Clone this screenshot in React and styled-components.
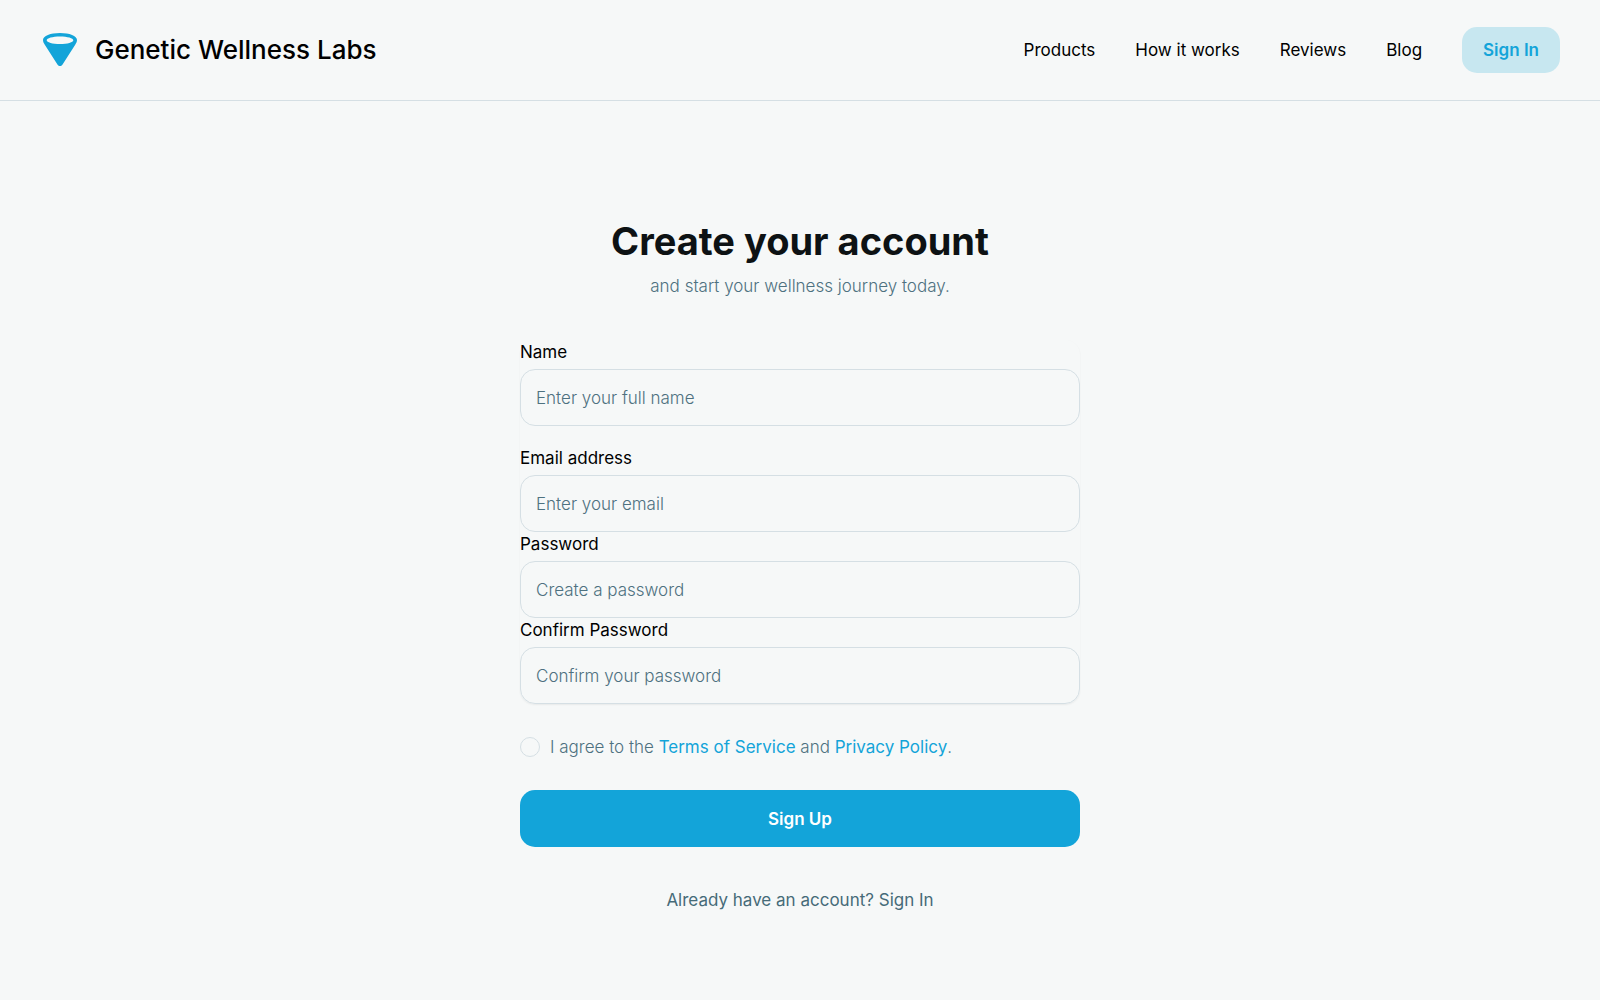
import React, { useState } from "react";
import styled, { createGlobalStyle } from "styled-components";

const color = {
  page: "#f6f8f8",
  ink: "#0d1214",
  muted: "#4e7180",
  deep: "#466b78",
  line: "#d5dfe4",
  brand: "#13a4d9",
  brandSoft: "#c7e7f0",
};

const GlobalStyle = createGlobalStyle`
  *, *::before, *::after { box-sizing: border-box; }
  body {
    margin: 0;
    background: ${color.page};
    color: #000;
    font: 400 17px/24px Inter, "Open Sans", sans-serif;
  }
  a { color: inherit; text-decoration: none; }
  button, input { font: inherit; }
`;

const Header = styled.header`
  display: flex;
  align-items: center;
  justify-content: space-between;
  padding: 27px 40px;
  border-bottom: 1px solid ${color.line};
`;

const Brand = styled.a`
  display: flex;
  align-items: center;
  gap: 15px;
  font-size: 26px;
  font-weight: 500;
  line-height: 40px;
`;

const Logo = styled.svg`
  width: 40px;
  height: 40px;
`;

const Nav = styled.nav`
  display: flex;
  align-items: center;
  gap: 40px;
`;

const HeaderButton = styled.button`
  height: 46px;
  padding: 0 21px;
  border: 0;
  border-radius: 15px;
  background: ${color.brandSoft};
  color: ${color.brand};
  font-weight: 600;
  cursor: pointer;
`;

const Main = styled.main`
  display: flex;
  flex-direction: column;
  width: 100%;
  max-width: 600px;
  margin: 0 auto;
  padding: 116px 20px 80px;
`;

const Title = styled.h1`
  margin: 0;
  color: ${color.ink};
  font-size: 38px;
  font-weight: 700;
  line-height: 48px;
  text-align: center;
`;

const Subtitle = styled.p`
  margin: 9px 0 42px;
  color: ${color.muted};
  font-weight: 300;
  text-align: center;
`;

const Form = styled.form`
  display: flex;
  flex-direction: column;
  gap: 31px;
`;

const Fields = styled.div`
  display: flex;
  flex-direction: column;
  border-radius: 15px;
  box-shadow: 0 1px 2px rgba(0, 0, 0, 0.06);
`;

const Field = styled.div`
  display: flex;
  flex-direction: column;
  gap: 5px;
  margin-bottom: ${(p) => (p.$spaced ? "20px" : "0")};
`;

const Input = styled.input`
  width: 100%;
  height: 57px;
  padding: 0 15px;
  border: 1px solid ${color.line};
  border-radius: 15px;
  background: ${color.page};
  color: ${color.ink};
  font-weight: 300;

  &::placeholder { color: ${color.muted}; opacity: 1; }
  &:focus { outline: none; border-color: ${color.brand}; }
`;

const Agreement = styled.div`
  display: flex;
  align-items: center;
  gap: 10px;
  color: ${color.muted};
  font-weight: 300;
`;

const Checkbox = styled.input`
  appearance: none;
  width: 20px;
  height: 20px;
  margin: 0;
  border: 1px solid ${color.line};
  border-radius: 50%;
  cursor: pointer;

  &:checked { background: ${color.brand}; border-color: ${color.brand}; }
`;

const TextLink = styled.a`
  color: ${color.brand};
  font-weight: 400;
`;

const SubmitButton = styled.button`
  height: 57px;
  border: 0;
  border-radius: 15px;
  background: ${color.brand};
  color: #fff;
  font-weight: 600;
  cursor: pointer;
`;

const Footnote = styled.p`
  margin: 41px 0 0;
  color: ${color.deep};
  text-align: center;
`;

const links = ["Products", "How it works", "Reviews", "Blog"];

const fields = [
  { id: "name", label: "Name", type: "text", hint: "Enter your full name", spaced: true },
  { id: "email", label: "Email address", type: "email", hint: "Enter your email" },
  { id: "password", label: "Password", type: "password", hint: "Create a password" },
  { id: "confirm", label: "Confirm Password", type: "password", hint: "Confirm your password" },
];

export default function App() {
  const [agreed, setAgreed] = useState(false);

  return (
    <>
      <GlobalStyle />
      <Header>
        <Brand href="#">
          <Logo viewBox="0 0 40 40" aria-hidden="true">
            <path
              fill={color.brand}
              fillRule="evenodd"
              d="M20 3C10.500 3 3 5.800 3 10c0 1.700.800 3.100 1.800 4.700L17.600 34.700c1.100 1.800 3.700 1.800 4.800 0L35.200 14.700C36.200 13.100 37 11.700 37 10 37 5.800 29.500 3 20 3Zm0 3.400c7.500 0 13.300 1.700 13.300 3.800S27.500 14 20 14 6.700 12.300 6.700 10.200 12.500 6.400 20 6.400Z"
            />
          </Logo>
          Genetic Wellness Labs
        </Brand>
        <Nav>
          {links.map((text) => (
            <a key={text} href="#">{text}</a>
          ))}
          <HeaderButton type="button">Sign In</HeaderButton>
        </Nav>
      </Header>
      <Main>
        <Title>Create your account</Title>
        <Subtitle>and start your wellness journey today.</Subtitle>
        <Form onSubmit={(e) => e.preventDefault()}>
          <Fields>
            {fields.map((f) => (
              <Field key={f.id} $spaced={f.spaced}>
                <label htmlFor={f.id}>{f.label}</label>
                <Input id={f.id} type={f.type} placeholder={f.hint} />
              </Field>
            ))}
          </Fields>
          <Agreement>
            <Checkbox
              id="agree"
              type="checkbox"
              checked={agreed}
              onChange={(e) => setAgreed(e.target.checked)}
            />
            <label htmlFor="agree">
              I agree to the <TextLink href="#">Terms of Service</TextLink> and{" "}
              <TextLink href="#">Privacy Policy</TextLink>.
            </label>
          </Agreement>
          <SubmitButton type="submit">Sign Up</SubmitButton>
        </Form>
        <Footnote>
          Already have an account? <a href="#">Sign In</a>
        </Footnote>
      </Main>
    </>
  );
}
